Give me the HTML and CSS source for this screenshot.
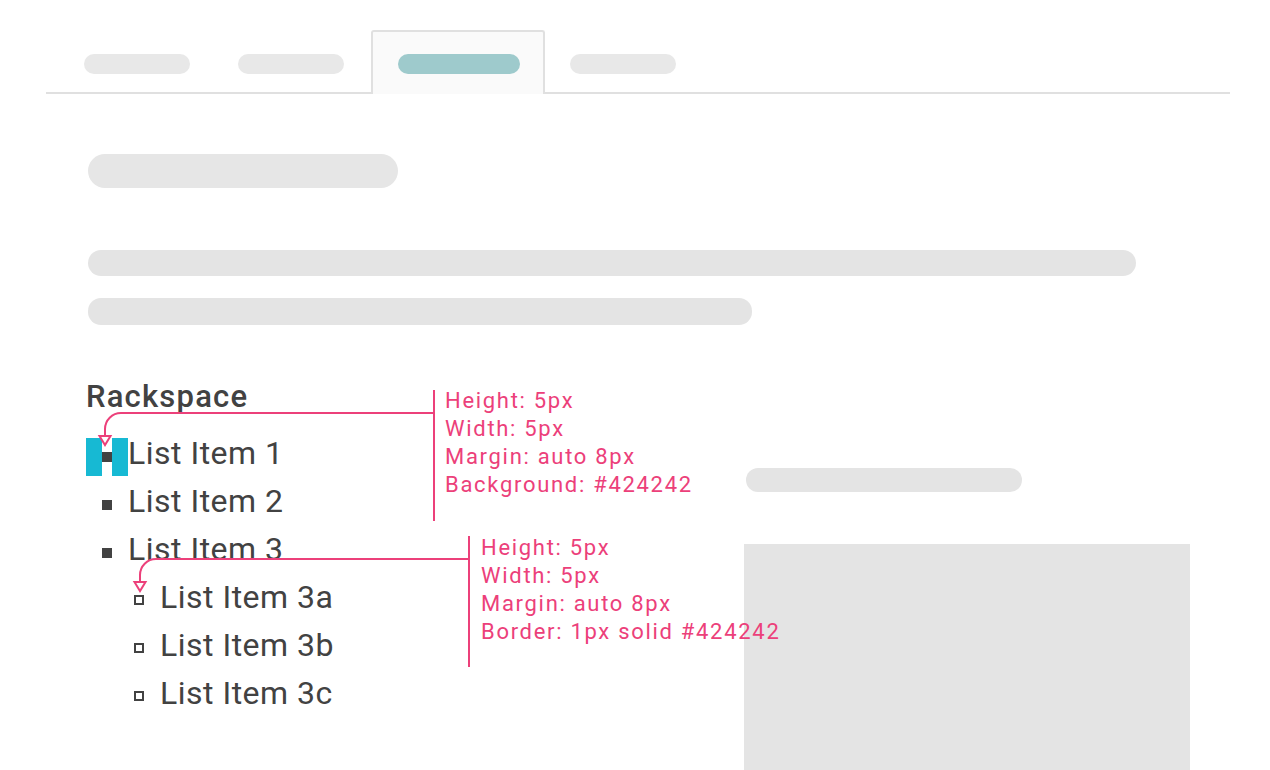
FILE: index.html
```html
<!DOCTYPE html>
<html lang="en">
<head>
<meta charset="utf-8">
<title>List bullets spec</title>
<link rel="stylesheet" href="styles.css">
</head>
<body>
<div class="page">
  <nav class="tabs">
    <div class="tab tab-1"><span class="tab-pill"></span></div>
    <div class="tab tab-2"><span class="tab-pill"></span></div>
    <div class="tab tab-active"><span class="tab-pill"></span></div>
    <div class="tab tab-4"><span class="tab-pill"></span></div>
  </nav>

  <main class="content">
    <div class="ph ph-title"></div>
    <div class="ph ph-line ph-long"></div>
    <div class="ph ph-line ph-short"></div>

    <section class="lower">
      <div class="left-col">
        <h2 class="heading">Rackspace</h2>
        <ul class="list">
          <li><div class="row"><span class="bullet-box highlight"><span class="bullet"></span></span>List Item 1</div></li>
          <li><div class="row"><span class="bullet-box"><span class="bullet"></span></span>List Item 2</div></li>
          <li>
            <div class="row"><span class="bullet-box"><span class="bullet"></span></span>List Item 3</div>
            <ul class="list sub">
              <li><div class="row"><span class="bullet-box"><span class="bullet hollow"></span></span>List Item 3a</div></li>
              <li><div class="row"><span class="bullet-box"><span class="bullet hollow"></span></span>List Item 3b</div></li>
              <li><div class="row"><span class="bullet-box"><span class="bullet hollow"></span></span>List Item 3c</div></li>
            </ul>
          </li>
        </ul>
      </div>
      <div class="right-col">
        <div class="ph ph-side"></div>
        <div class="ph ph-box"></div>
      </div>
    </section>
  </main>

  <svg class="annot-lines" width="1270" height="770" viewBox="0 0 1270 770" aria-hidden="true">
    <g fill="none" stroke="#ec407a" stroke-width="2">
      <path d="M434 390 V521"/>
      <path d="M434 413 H121 A16 16 0 0 0 105 429 V436"/>
      <path d="M469 536 V667"/>
      <path d="M469 559 H156 A16 16 0 0 0 140 575 V581"/>
    </g>
    <g fill="#ffffff" stroke="#ec407a" stroke-width="2" stroke-linejoin="miter">
      <path d="M99.5 436 H110.5 L105 445 Z"/>
      <path d="M134.5 582 H145.5 L140 591 Z"/>
    </g>
  </svg>

  <div class="note note-1">
    <div>Height: 5px</div>
    <div>Width: 5px</div>
    <div>Margin: auto 8px</div>
    <div>Background: #424242</div>
  </div>
  <div class="note note-2">
    <div>Height: 5px</div>
    <div>Width: 5px</div>
    <div>Margin: auto 8px</div>
    <div>Border: 1px solid #424242</div>
  </div>
</div>
</body>
</html>
```

FILE: styles.css
```css
* { box-sizing: border-box; }

html, body {
  margin: 0;
  padding: 0;
  background: #ffffff;
}

body {
  font-family: Roboto, "Liberation Sans", Arial, sans-serif;
  color: #424242;
  overflow: hidden;
}

.page {
  position: relative;
  width: 1270px;
  height: 770px;
  overflow: hidden;
}

/* ---------- tabs ---------- */
.tabs {
  display: flex;
  align-items: flex-start;
  margin: 30px 40px 0 46px;
  padding-left: 14px;
  height: 64px;
  border-bottom: 2px solid #e0e0e0;
}

.tab {
  height: 64px;
  margin-bottom: -2px;
  padding: 22px 22px 0 22px;
  border: 2px solid transparent;
  border-bottom: 0;
  border-radius: 3px 3px 0 0;
  display: flex;
  align-items: flex-start;
}

.tab-pill {
  display: block;
  width: 106px;
  height: 20px;
  border-radius: 10px;
  background: #e8e8e8;
}

.tab-2 { padding-right: 23px; }

.tab-active {
  margin-left: 2px;
  padding-left: 25px;
  padding-right: 23px;
  background: #fafafa;
  border-color: #e0e0e0;
  position: relative;
  z-index: 1;
}

.tab-active .tab-pill {
  width: 122px;
  background: #9ecacc;
}

.tab-4 { padding-left: 23px; }

/* ---------- content ---------- */
.content {
  padding-left: 86px;
}

.ph {
  background: #e4e4e4;
}

.ph-title {
  margin: 60px 0 0 2px;
  width: 310px;
  height: 34px;
  border-radius: 17px;
  background: #e6e6e6;
}

.ph-line {
  height: 26px;
  border-radius: 13px;
  margin-left: 2px;
}

.ph-long {
  margin-top: 62px;
  width: 1048px;
}

.ph-short {
  margin-top: 22px;
  width: 664px;
  height: 27px;
}

.lower {
  display: grid;
  grid-template-columns: 658px 446px;
  margin-top: 54px;
}

.heading {
  margin: 0;
  font-size: 31px;
  line-height: 36px;
  font-weight: 500;
  letter-spacing: 1.2px;
  color: #424242;
}

.list {
  list-style: none;
  margin: 14px 0 0 0;
  padding: 0;
}

.list.sub {
  margin-top: 0;
  padding-left: 32px;
}

.row {
  display: flex;
  align-items: center;
  height: 48px;
  font-size: 32px;
  line-height: 48px;
  letter-spacing: 0.5px;
  color: #424242;
}

.bullet-box {
  width: 42px;
  height: 38px;
  margin-top: 8px;
  flex: none;
  display: flex;
  align-items: center;
  justify-content: center;
}

.bullet-box.highlight {
  background: linear-gradient(to right, #17b9d3 0, #17b9d3 16px, transparent 16px, transparent 26px, #17b9d3 26px);
}

.bullet {
  display: block;
  width: 10px;
  height: 10px;
  background: #424242;
}

.bullet.hollow {
  width: 10px;
  height: 10px;
  background: transparent;
  border: 2px solid #424242;
  margin-top: -2px;
}

.right-col {
  display: flex;
  flex-direction: column;
  align-items: flex-start;
}

.ph-side {
  margin: 89px 0 0 2px;
  width: 276px;
  height: 24px;
  border-radius: 12px;
}

.ph-box {
  margin-top: 52px;
  width: 446px;
  height: 260px;
}

/* ---------- annotations (overlay) ---------- */
.annot-lines {
  position: absolute;
  left: 0;
  top: 0;
  pointer-events: none;
  z-index: 2;
}

.note {
  position: absolute;
  z-index: 3;
  font-size: 22px;
  line-height: 28px;
  letter-spacing: 1.7px;
  color: #ec407a;
  white-space: nowrap;
}

.note-1 { left: 445px; top: 387px; }
.note-2 { left: 481px; top: 534px; }
```
